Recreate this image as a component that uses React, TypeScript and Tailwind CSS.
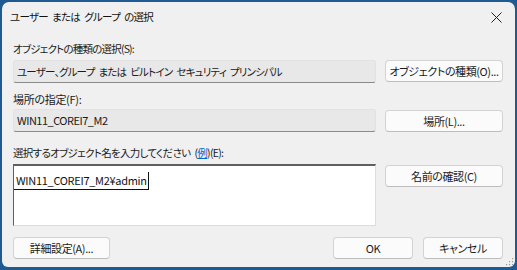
import React from "react";

const font = {
  fontFamily: '"Noto Sans CJK JP", "Noto Sans", sans-serif',
};

function Btn({ children, className = "" }: { children: React.ReactNode; className?: string }) {
  return (
    <div
      className={
        "flex items-center justify-center whitespace-nowrap h-[22px] rounded-[4px] border border-[#d3d3d3] border-b-[#bdbdbd] bg-[#fbfbfb] text-[11px] tracking-[-0.4px] text-[#1a1a1a] leading-none " +
        className
      }
    >
      {children}
    </div>
  );
}

function Field({ children, latin = false }: { children: React.ReactNode; latin?: boolean }) {
  return (
    <div
      className={
        "flex items-center w-[363px] h-[23px] pl-[3px] rounded-[3px] bg-[#e8e8e8] border border-[#e2e2e2] border-b-[#8a8a8a] text-[#1a1a1a] whitespace-pre " +
        (latin ? "text-[11px] tracking-[-0.5px]" : "text-[10.5px] tracking-[-0.8px]")
      }
    >
      {children}
    </div>
  );
}

const Sp = () => <span className="inline-block w-[4px]" />;

export default function App() {
  return (
    <div
      className="w-[517px] h-[270px] bg-[#1f5a92] pt-[2px] px-[2px] pb-[3px] [font-feature-settings:'palt']"
      style={font}
    >
      <div className="relative w-full h-full rounded-t-[7px] rounded-b-[6px] bg-[#f0f0f0] flex flex-col">
        {/* title bar */}
        <div className="h-[30px] flex items-center justify-between pl-[8px] pr-[11px]">
          <span className="text-[10.5px] tracking-[-0.7px] text-[#111] whitespace-pre">
            ユーザー<Sp />または<Sp />グループ<Sp />の選択
          </span>
          <svg width="11" height="11" viewBox="0 0 11 11" className="mr-[2px]">
            <path d="M0.5 0.5 L10.5 10.5 M10.5 0.5 L0.5 10.5" stroke="#222" strokeWidth="1" fill="none" />
          </svg>
        </div>

        <div className="flex flex-col pl-[11px] pr-[12px]">
          <div className="mt-[9px] h-[16px] flex items-center text-[10.5px] tracking-[-0.8px] text-[#1a1a1a]">
            オブジェクトの種類の選択(S):
          </div>
          <div className="mt-[3px] flex gap-[9px] items-start">
            <Field>
              ユーザー、グループ<Sp />または<Sp />ビルトイン<Sp />セキュリティ<Sp />プリンシパル
            </Field>
            <Btn className="w-[118px]">オブジェクトの種類(O)...</Btn>
          </div>

          <div className="mt-[8px] h-[16px] flex items-center text-[11px] tracking-[-0.3px] text-[#1a1a1a]">
            場所の指定(F):
          </div>
          <div className="mt-[2px] flex gap-[9px] items-start">
            <Field latin>WIN11_COREI7_M2</Field>
            <div className="pt-[1px]">
              <Btn className="w-[118px]">場所(L)...</Btn>
            </div>
          </div>

          <div className="mt-[13px] h-[16px] flex items-center text-[10.5px] tracking-[-0.7px] text-[#1a1a1a] whitespace-pre">
            選択するオブジェクト名を入力してください<Sp />(<span className="text-[#0066cc] underline">例</span>)(E):
          </div>
          <div className="mt-[3px] flex gap-[9px] items-start">
            <div className="w-[363px] h-[62px] bg-white border-t-[2px] border-l border-t-[#5f5f5f] border-l-[#5f5f5f] border-r border-b border-r-[#dcdcdc] border-b-[#dcdcdc]">
              <div className="inline-flex items-center h-[18px] pl-[2px] pr-[1px] border-r border-b border-[#111] text-[11px] tracking-[-0.3px] text-[#111]">
                WIN11_COREI7_M2¥admin
              </div>
            </div>
            <div className="pt-[1px]">
              <Btn className="w-[118px]">名前の確認(C)</Btn>
            </div>
          </div>

          <div className="mt-[11px] flex items-center">
            <Btn className="w-[97px]">詳細設定(A)...</Btn>
            <div className="flex-1" />
            <Btn className="w-[80px] border-[#0067c0] border-b-[#0067c0]">OK</Btn>
            <Btn className="w-[80px] ml-[10px]">キャンセル</Btn>
          </div>
        </div>

        {/* resize grip */}
        <svg width="9" height="9" viewBox="0 0 9 9" className="absolute right-[1px] bottom-[1px]">
          <rect x="7" y="1" width="1.2" height="1.2" fill="#9a9a9a" />
          <rect x="4" y="4" width="1.2" height="1.2" fill="#9a9a9a" />
          <rect x="7" y="4" width="1.2" height="1.2" fill="#9a9a9a" />
          <rect x="1" y="7" width="1.2" height="1.2" fill="#9a9a9a" />
          <rect x="4" y="7" width="1.2" height="1.2" fill="#9a9a9a" />
          <rect x="7" y="7" width="1.2" height="1.2" fill="#9a9a9a" />
        </svg>
      </div>
    </div>
  );
}
